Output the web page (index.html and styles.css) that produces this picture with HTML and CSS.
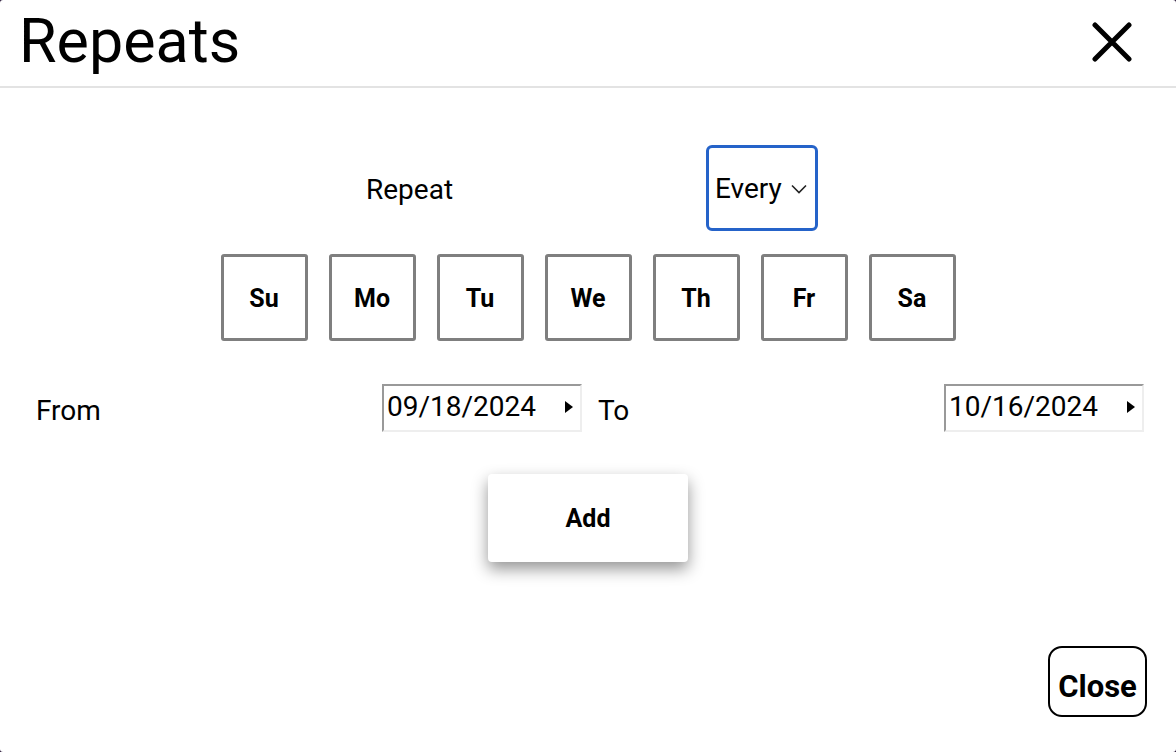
FILE: index.html
```html
<!DOCTYPE html>
<html lang="en">
<head>
<meta charset="utf-8">
<title>Repeats</title>
<link rel="stylesheet" href="styles.css">
</head>
<body>
<div class="dialog">
  <header class="dialog-header">
    <h1 class="dialog-title">Repeats</h1>
    <button class="icon-close" aria-label="Close">
      <svg viewBox="0 0 40 40" width="40" height="40"><path d="M3 3 L37 37 M37 3 L3 37" stroke="#000" stroke-width="5" stroke-linecap="round" fill="none"/></svg>
    </button>
  </header>
  <main class="dialog-body">
    <div class="repeat-row">
      <span class="label">Repeat</span>
      <div class="select">
        <span>Every</span>
        <svg class="chev" viewBox="0 0 16 10" width="16" height="10"><path d="M1 1.5 L8 8.5 L15 1.5" stroke="#222" stroke-width="1.6" fill="none"/></svg>
      </div>
    </div>
    <div class="days">
      <button class="day">Su</button>
      <button class="day">Mo</button>
      <button class="day">Tu</button>
      <button class="day">We</button>
      <button class="day">Th</button>
      <button class="day">Fr</button>
      <button class="day">Sa</button>
    </div>
    <div class="range">
      <div class="range-half">
        <span class="label">From</span>
        <div class="date"><span>09/18/2024</span><span class="tri"></span></div>
      </div>
      <div class="range-half">
        <span class="label">To</span>
        <div class="date"><span>10/16/2024</span><span class="tri"></span></div>
      </div>
    </div>
    <div class="add-wrap">
      <button class="add">Add</button>
    </div>
  </main>
  <footer class="dialog-footer">
    <button class="close-btn">Close</button>
  </footer>
</div>
</body>
</html>
```
FILE: styles.css
```css
html, body {
  margin: 0;
  padding: 0;
  background: #2a1a3a;
}
body {
  font-family: Roboto, "Liberation Sans", sans-serif;
  color: #000;
}
.dialog {
  width: 1176px;
  height: 752px;
  background: #fff;
  border-radius: 3px;
  display: flex;
  flex-direction: column;
  box-sizing: border-box;
}
.dialog-header {
  height: 86px;
  border-bottom: 2px solid #e3e3e3;
  display: flex;
  align-items: center;
  justify-content: space-between;
  padding: 0 44px 0 19px;
  box-sizing: content-box;
}
.dialog-title {
  margin: 0;
  font-size: 61px;
  font-weight: 400;
  line-height: 1;
  padding-bottom: 3px;
}
.icon-close {
  border: 0;
  background: none;
  padding: 0;
  width: 40px;
  height: 40px;
  display: flex;
  margin-bottom: 2px;
}
.dialog-body {
  flex: 1;
  display: flex;
  flex-direction: column;
}
.label {
  font-size: 28px;
}
.repeat-row {
  display: flex;
  align-items: center;
  padding-left: 366px;
  gap: 253px;
  margin-top: 57px;
}
.repeat-row .label {
  margin-top: 3px;
}
.select {
  width: 112px;
  height: 86px;
  box-sizing: border-box;
  border: 3px solid #2563c9;
  border-radius: 6px;
  display: flex;
  align-items: center;
  padding-left: 6px;
  gap: 9px;
  font-size: 28px;
}
.chev {
  margin-top: 1px;
}
.days {
  display: flex;
  justify-content: center;
  gap: 21px;
  margin-top: 23px;
}
.day {
  width: 87px;
  height: 87px;
  box-sizing: border-box;
  border: 3px solid #7f7f7f;
  border-radius: 3px;
  background: #fff;
  font-family: inherit;
  font-weight: 700;
  font-size: 25px;
  color: #000;
  padding: 2px 0 0;
}
.range {
  display: flex;
  gap: 16px;
  padding: 0 32px 0 36px;
  margin-top: 43px;
}
.range-half {
  flex: 1;
  display: flex;
  align-items: center;
  justify-content: space-between;
}
.date {
  width: 200px;
  height: 48px;
  box-sizing: border-box;
  border: 2px solid;
  border-color: #999 #eee #eee #999;
  display: flex;
  align-items: center;
  justify-content: space-between;
  padding: 0 7px 0 3px;
  font-size: 28px;
}
.date span:first-child {
  margin-top: -4px;
}
.tri {
  width: 0;
  height: 0;
  border-top: 6px solid transparent;
  border-bottom: 6px solid transparent;
  border-left: 8px solid #000;
  margin-top: -2px;
}
.range-half .label {
  margin-top: 4px;
}
.add-wrap {
  display: flex;
  justify-content: center;
  margin-top: 42px;
}
.add {
  width: 200px;
  height: 88px;
  border: 0;
  border-radius: 4px;
  background: #fff;
  box-shadow: 0 7px 16px rgba(0,0,0,0.42);
  font-family: inherit;
  font-weight: 700;
  font-size: 25px;
  color: #000;
}
.dialog-footer {
  display: flex;
  justify-content: flex-end;
  padding: 0 29px 35px 0;
}
.close-btn {
  width: 99px;
  height: 71px;
  box-sizing: border-box;
  border: 2px solid #000;
  border-radius: 14px;
  background: #fff;
  font-family: inherit;
  font-weight: 700;
  font-size: 31px;
  color: #000;
  padding: 9px 0 0;
}
```
